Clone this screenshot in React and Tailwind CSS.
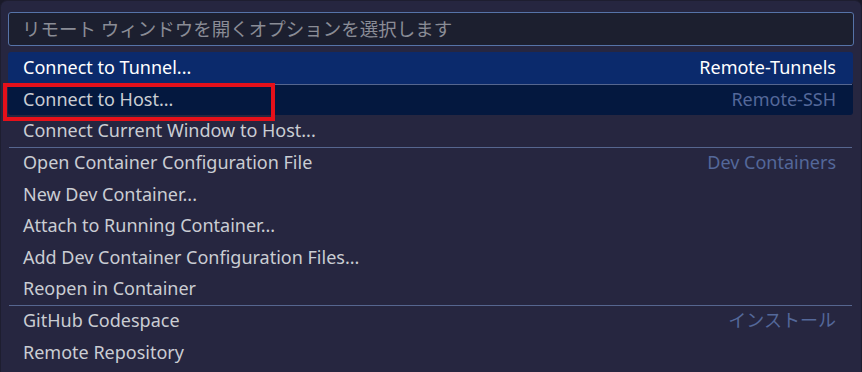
const rows = [
  { label: "Connect to Tunnel...", detail: "Remote-Tunnels", state: "active" },
  { label: "Connect to Host...", detail: "Remote-SSH", state: "focus", sep: true, marked: true },
  { label: "Connect Current Window to Host..." },
  { label: "Open Container Configuration File", detail: "Dev Containers", sep: true },
  { label: "New Dev Container..." },
  { label: "Attach to Running Container..." },
  { label: "Add Dev Container Configuration Files..." },
  { label: "Reopen in Container" },
  { label: "GitHub Codespace", detail: "インストール", sep: true },
  { label: "Remote Repository" },
];

const font = { fontFamily: '"Noto Sans", "Noto Sans CJK JP", sans-serif' };

function Row({ row }) {
  const bg =
    row.state === "active"
      ? "bg-[#0b2a6c] text-white rounded-[3px]"
      : row.state === "focus"
      ? "bg-[#04183f] text-[#cacdd3] rounded-b-[3px]"
      : "text-[#cacdd3]";
  const detail = row.state === "active" ? "text-white" : "text-[#54689a]";
  return (
    <div className="relative">
      {row.sep && <div className="absolute left-[1px] right-[1px] top-0 h-px bg-[#56668f]" />}
      <div className={`flex h-[31.6px] items-center justify-between pl-[15px] pr-[17px] text-[18px] ${bg}`}>
        <span>{row.label}</span>
        {row.detail && <span className={detail}>{row.detail}</span>}
      </div>
      {row.marked && (
        <div className="pointer-events-none absolute left-[-5px] top-[-1px] h-[38px] w-[272px] border-[4px] border-[#e5101a]" />
      )}
    </div>
  );
}

export default function App() {
  return (
    <div className="h-[372px] w-[862px] overflow-hidden bg-[#1a1a29]" style={font}>
      <div className="h-full rounded-t-[7px] border border-b-0 border-[#1e1e30] bg-[#262640] px-[7px] pt-[11px]">
        <div className="flex h-[34px] items-center rounded-[3px] border border-[#5673a8] bg-[#1c1f2f] pl-[13px] text-[18.5px] text-[#8a8c96]">
          リモート ウィンドウを開くオプションを選択します
        </div>
        <div className="mt-[6px] pr-[1px]">
          {rows.map((r) => (
            <Row key={r.label} row={r} />
          ))}
        </div>
      </div>
    </div>
  );
}
